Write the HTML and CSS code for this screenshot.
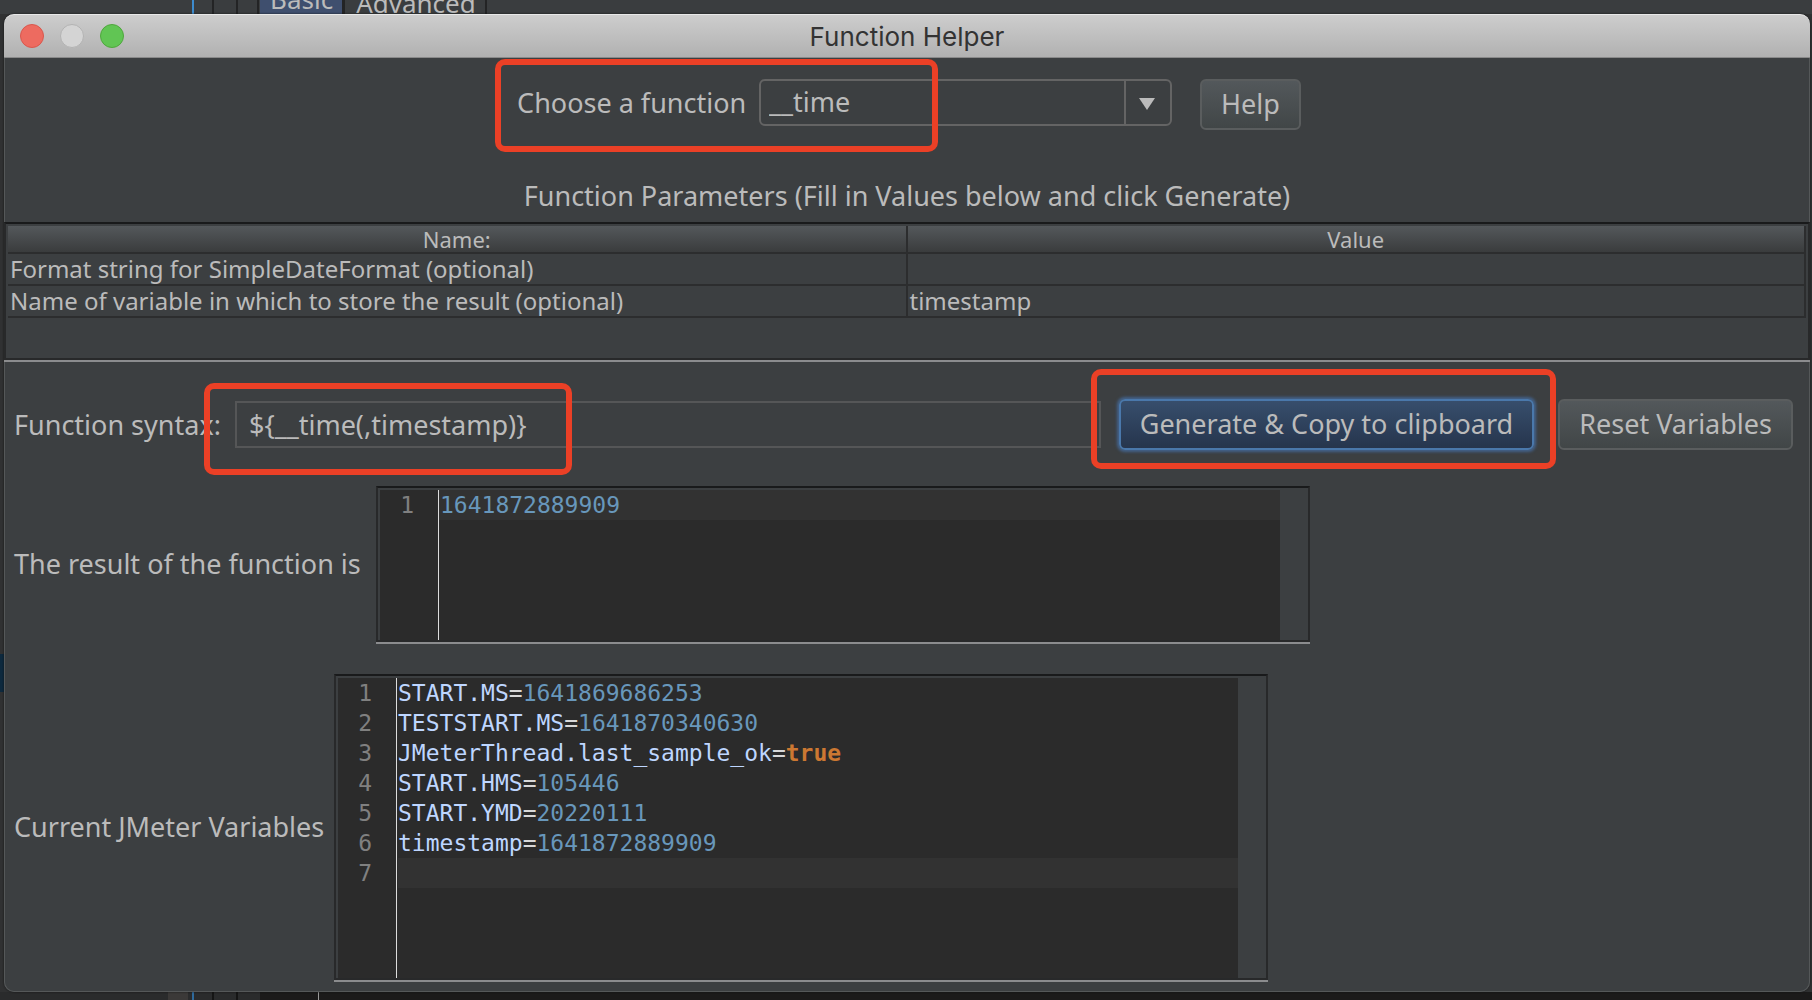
FILE: index.html
```html
<!DOCTYPE html>
<html lang="en">
<head>
    <meta charset="UTF-8">
    <meta name="viewport" content="width=device-width, initial-scale=1.0">
    <title>Function Helper</title>
    <link rel="stylesheet" href="styles.css">
</head>
<body>
    <!-- main window behind the dialog -->
    <div class="backdrop-top">
        <span class="tab tab-active">Basic</span>
        <span class="tab">Advanced</span>
    </div>

    <main class="dialog">
        <header class="titlebar">
            <div class="lights">
                <button class="light close" aria-label="Close"></button>
                <button class="light minimize" aria-label="Minimize" disabled></button>
                <button class="light zoom" aria-label="Zoom"></button>
            </div>
            <h1>Function Helper</h1>
        </header>

        <div class="chooser">
            <label for="function">Choose a function</label>
            <div class="combo">
                <select id="function">
                    <option>__time</option>
                </select>
                <svg class="arrow" viewBox="0 0 44 43" aria-hidden="true"><path d="M13 17h16l-8 12z"/></svg>
            </div>
            <button class="btn help">Help</button>
        </div>

        <h2>Function Parameters (Fill in Values below and click Generate)</h2>

        <div class="table-pane">
            <table>
                <thead>
                    <tr><th>Name:</th><th>Value</th></tr>
                </thead>
                <tbody>
                    <tr><td>Format string for SimpleDateFormat (optional)</td><td></td></tr>
                    <tr><td>Name of variable in which to store the result (optional)</td><td>timestamp</td></tr>
                </tbody>
            </table>
        </div>

        <div class="syntax">
            <label for="syntax">Function syntax:</label>
            <input type="text" id="syntax" value="${__time(,timestamp)}" readonly>
            <button class="btn primary">Generate &amp; Copy to clipboard</button>
            <button class="btn">Reset Variables</button>
        </div>

        <div class="row result">
            <label for="result">The result of the function is</label>
            <div class="editor">
                <div class="gutter"><span>1</span></div>
                <textarea class="code number" id="result" spellcheck="false" readonly>1641872889909</textarea>
            </div>
        </div>

        <div class="row variables">
            <span class="row-label" id="variables-label">Current JMeter Variables</span>
            <div class="editor">
                <div class="gutter">
                    <span>1</span><span>2</span><span>3</span><span>4</span><span>5</span><span>6</span><span>7</span>
                </div>
                <div class="code" role="textbox" aria-multiline="true" aria-readonly="true" aria-labelledby="variables-label">
                    <div class="line"><span class="key">START.MS</span>=<span class="number">1641869686253</span></div>
                    <div class="line"><span class="key">TESTSTART.MS</span>=<span class="number">1641870340630</span></div>
                    <div class="line"><span class="key">JMeterThread.last_sample_ok</span>=<span class="bool">true</span></div>
                    <div class="line"><span class="key">START.HMS</span>=<span class="number">105446</span></div>
                    <div class="line"><span class="key">START.YMD</span>=<span class="number">20220111</span></div>
                    <div class="line"><span class="key">timestamp</span>=<span class="number">1641872889909</span></div>
                    <div class="line current"></div>
                </div>
            </div>
        </div>

        <!-- highlight boxes -->
        <div class="mark mark-choose"></div>
        <div class="mark mark-syntax"></div>
        <div class="mark mark-generate"></div>
    </main>

    <div class="backdrop-bottom"></div>
</body>
</html>
```

FILE: styles.css
```css
* {
    box-sizing: border-box;
    margin: 0;
    padding: 0;
}
body {
    min-height: 100vh;
    display: flex;
    flex-direction: column;
    overflow: hidden;
    font-family: 'Noto Sans', 'Open Sans', sans-serif;
    font-size: 27px;
    line-height: 36px;
    color: #bbb;
    background: linear-gradient(#0d293e, #0d293e) 0 654px / 4px 38px no-repeat, #303132;
}
button, input, select, textarea {
    font: inherit;
    color: inherit;
}

/* main window behind */
.backdrop-top {
    height: 14px;
    padding-left: 260px;
    display: flex;
    align-items: flex-end;
    overflow: hidden;
    font-size: 26px;
    background:
        linear-gradient(#3d8bcd, #3d8bcd) 192px 0 / 2px 14px no-repeat,
        linear-gradient(#232425, #232425) 212px 0 / 2px 14px no-repeat,
        linear-gradient(#232425, #232425) 236px 0 / 2px 14px no-repeat,
        linear-gradient(#232425, #232425) 257px 0 / 2px 14px no-repeat,
        linear-gradient(#232425, #232425) 341px 0 / 4px 14px no-repeat,
        linear-gradient(#232425, #232425) 485px 0 / 2px 14px no-repeat,
        #3a3d3f;
}
.tab {
    padding: 0 9px 0 14px;
    line-height: 22px;
}
.tab-active {
    padding: 0 9px 4px 10px;
    background: #3f4f6e;
}
.backdrop-bottom {
    height: 8px;
    background:
        linear-gradient(#3b3938, #3b3938) 168px 0 / 20px 8px no-repeat,
        linear-gradient(#2f6a9c, #2f6a9c) 192px 0 / 2px 8px no-repeat,
        linear-gradient(#151515, #151515) 212px 0 / 2px 8px no-repeat,
        linear-gradient(#151515, #151515) 236px 0 / 2px 8px no-repeat,
        linear-gradient(#999, #999) 318px 0 / 1px 8px no-repeat,
        linear-gradient(90deg, #2a2b2c 260px, #1b1a1a 260px);
}

/* dialog */
.dialog {
    position: relative;
    flex: 1;
    margin: 0 2px 0 4px;
    background: #3c3f41;
    border-radius: 10px;
    box-shadow: inset 0 0 0 1px #555859, 0 0 2px #111;
}
.titlebar {
    position: relative;
    height: 44px;
    display: flex;
    align-items: center;
    justify-content: center;
    color: #333;
    background: linear-gradient(#cdcdcd, #b1b1b1);
    border-top: 1px solid #e8e8e8;
    border-bottom: 1px solid #8a8a8a;
    border-radius: 10px 10px 0 0;
}
.titlebar h1 {
    padding-top: 2px;
    font-family: Inter, sans-serif;
    font-size: 26px;
    font-weight: 400;
    line-height: 32px;
}
.lights {
    position: absolute;
    left: 16px;
    top: 9px;
    display: flex;
    gap: 16px;
}
.light {
    width: 24px;
    height: 24px;
    border: 1px solid;
    border-radius: 50%;
}
.close {
    background: #ed6b60;
    border-color: #d9574d;
}
.minimize {
    background: #d4d4d4;
    border-color: #b3b3b3;
}
.zoom {
    background: #61c554;
    border-color: #4fa73d;
}

.chooser {
    display: flex;
    justify-content: center;
    align-items: flex-start;
    padding: 21px 0 0 4px;
    height: 112px;
}
.chooser label {
    width: 242px;
    padding-top: 6px;
    white-space: nowrap;
}
.combo {
    width: 413px;
    height: 47px;
    display: flex;
    border: 2px solid #646464;
    border-radius: 6px;
}
.combo select {
    flex: 1;
    appearance: none;
    padding: 0 8px 2px;
    background: none;
    border: 0;
}
.arrow {
    width: 46px;
    border-left: 2px solid #646464;
    fill: #bbb;
}
.btn {
    height: 51px;
    padding: 0 19px 2px;
    white-space: nowrap;
    background: linear-gradient(#53585b, #414647);
    border: 2px solid #5a5d5e;
    border-radius: 6px;
}
.help {
    margin-left: 28px;
}
h2 {
    height: 52px;
    padding-top: 8px;
    font-size: 27px;
    font-weight: 400;
    text-align: center;
}

/* parameters table */
.table-pane {
    height: 138px;
    padding: 2px;
    border: 2px solid #28292a;
    border-top-color: #191a1b;
    box-shadow: 0 2px #8b8c8e;
}
table {
    width: 100%;
    table-layout: fixed;
    border-collapse: collapse;
    font-size: 24px;
    line-height: 30px;
}
th {
    height: 27px;
    font-size: 22px;
    font-weight: 400;
    line-height: 25px;
    background: linear-gradient(#54585b, #3a3c3d);
}
td {
    height: 32px;
    padding: 0 2px;
}
th, td {
    border-right: 2px solid #2c2d2e;
    border-bottom: 2px solid #2c2d2e;
}

/* syntax row */
.syntax {
    display: flex;
    align-items: center;
    margin-top: 39px;
    padding: 0 17px 0 10px;
}
.syntax label {
    width: 221px;
    white-space: nowrap;
}
.syntax input {
    flex: 1;
    min-width: 0;
    height: 47px;
    padding: 0 12px;
    background: none;
    border: 2px solid #555657;
}
.primary {
    margin: 0 24px 0 18px;
    background: linear-gradient(#374e6c, #26354d);
    border-color: #4a78ab;
    box-shadow: 0 0 3px 2px #43628a;
}

/* editors */
.row {
    display: flex;
    align-items: center;
    padding-left: 10px;
}
.row label {
    width: 362px;
}
.row-label {
    width: 320px;
}
.editor {
    width: 934px;
    display: flex;
    padding: 2px 28px 0 2px;
    font-family: 'DejaVu Sans Mono', monospace;
    font-size: 23px;
    line-height: 30px;
    border: 2px solid #28292a;
    border-top-color: #191a1b;
    box-shadow: 0 2px #8b8c8e;
}
.result {
    margin-top: 36px;
}
.result .editor {
    height: 156px;
}
.variables {
    margin-top: 32px;
}
.variables .editor {
    height: 306px;
}
.gutter {
    width: 59px;
    padding-right: 24px;
    display: flex;
    flex-direction: column;
    text-align: right;
    color: #808080;
    background: #2b2b2b;
    border-right: 1px solid #ddd;
}
.code {
    flex: 1;
    padding-left: 1px;
    color: #d8d8d8;
    background: #2b2b2b;
}
textarea.code {
    resize: none;
    border: 0;
    outline: 0;
    background: linear-gradient(#323232, #323232) 0 0 / 100% 30px no-repeat, #2b2b2b;
}
.line {
    height: 30px;
    white-space: pre;
}
.current {
    background: #323232;
}
.key {
    color: #bed6ff;
}
.number, textarea.number {
    color: #6897bb;
}
.bool {
    color: #cc7832;
    font-weight: bold;
}

/* highlight boxes */
.mark {
    position: absolute;
    border: 6px solid #eb4026;
    border-radius: 10px;
    pointer-events: none;
}
.mark-choose {
    left: 491px;
    top: 45px;
    width: 443px;
    height: 93px;
}
.mark-syntax {
    left: 200px;
    top: 369px;
    width: 368px;
    height: 92px;
}
.mark-generate {
    right: 254px;
    top: 355px;
    width: 465px;
    height: 100px;
}
```
